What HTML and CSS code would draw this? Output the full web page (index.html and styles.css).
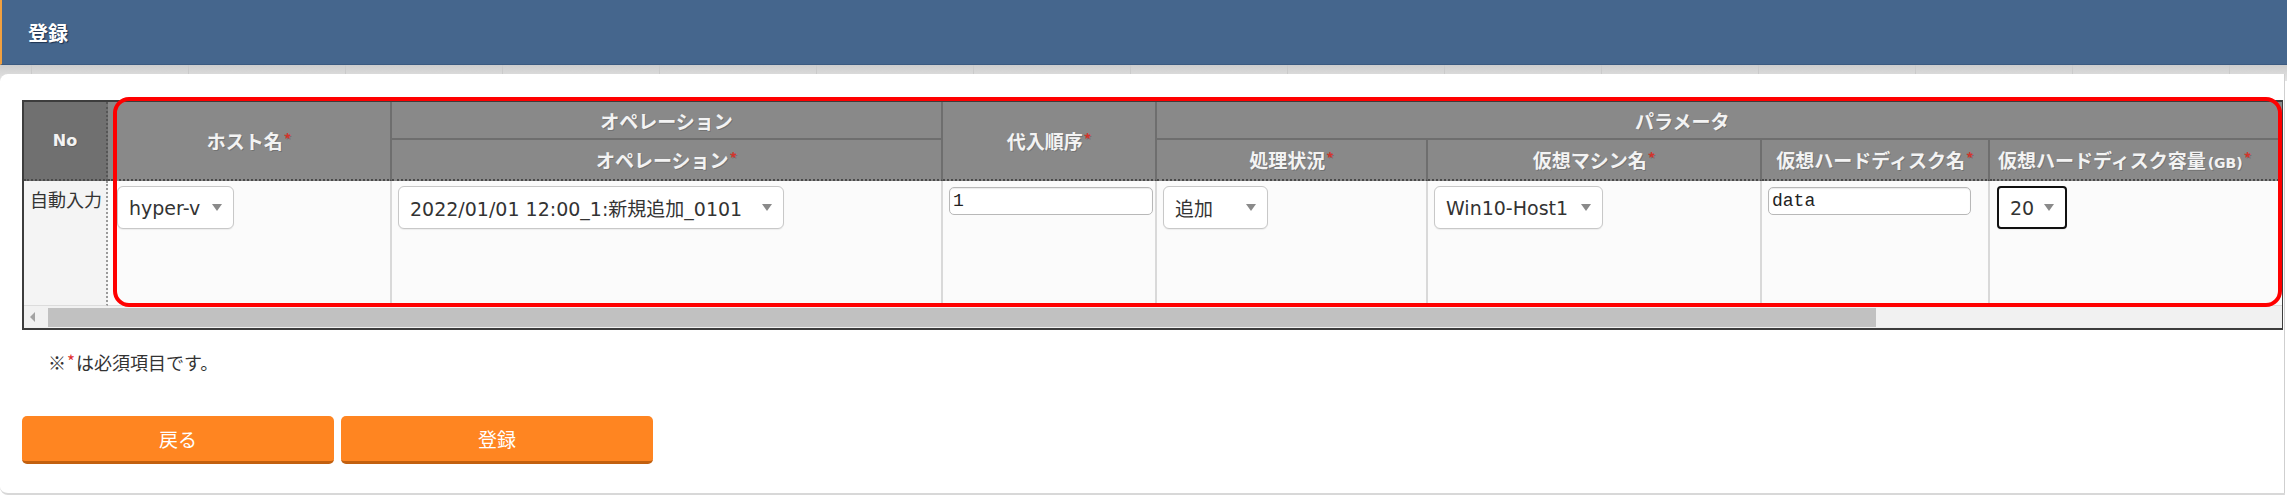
FILE: index.html
```html
<!DOCTYPE html>
<html lang="ja">
<head>
    <meta charset="UTF-8">
    <meta name="viewport" content="width=device-width, initial-scale=1.0">
    <title>登録</title>
    <link rel="stylesheet" href="styles.css">
</head>
<body>
    <header class="titlebar">
        <h1>登録</h1>
    </header>

    <div class="page">
        <main class="panel">
            <div class="table-area">
                <div class="table-scroll">
                    <table class="entry-table">
                        <colgroup>
                            <col class="c-no">
                            <col class="c-host">
                            <col class="c-op">
                            <col class="c-order">
                            <col class="c-status">
                            <col class="c-vm">
                            <col class="c-disk">
                            <col class="c-size">
                        </colgroup>
                        <thead>
                            <tr class="r1">
                                <th rowspan="2" class="th-no">No</th>
                                <th rowspan="2" class="th-span">ホスト名<span class="req">*</span></th>
                                <th class="th-group">オペレーション</th>
                                <th rowspan="2" class="th-span">代入順序<span class="req">*</span></th>
                                <th colspan="4" class="th-group th-param">パラメータ</th>
                            </tr>
                            <tr class="r2">
                                <th>オペレーション<span class="req">*</span></th>
                                <th>処理状況<span class="req">*</span></th>
                                <th>仮想マシン名<span class="req">*</span></th>
                                <th>仮想ハードディスク名<span class="req">*</span></th>
                                <th class="th-last">仮想ハードディスク容量<span class="unit">(GB)</span><span class="req">*</span></th>
                            </tr>
                        </thead>
                        <tbody>
                            <tr>
                                <td class="td-no">自動入力</td>
                                <td class="td-host">
                                    <div class="select sel-host"><span>hyper-v</span><i class="caret"></i></div>
                                </td>
                                <td>
                                    <div class="select sel-op"><span>2022/01/01 12:00_1:新規追加_0101</span><i class="caret"></i></div>
                                </td>
                                <td>
                                    <input class="text-input in-order" type="text" value="1">
                                </td>
                                <td>
                                    <div class="select sel-status"><span>追加</span><i class="caret"></i></div>
                                </td>
                                <td>
                                    <div class="select sel-vm"><span>Win10-Host1</span><i class="caret"></i></div>
                                </td>
                                <td>
                                    <input class="text-input in-disk" type="text" value="data">
                                </td>
                                <td class="td-size">
                                    <div class="select sel-size focused"><span>20</span><i class="caret"></i></div>
                                </td>
                            </tr>
                        </tbody>
                    </table>
                </div>
                <div class="scrollbar">
                    <i class="scroll-left"></i>
                    <div class="scroll-thumb"></div>
                </div>
                <div class="highlight"></div>
            </div>

            <p class="note">※<span class="req-note">*</span>は必須項目です。</p>

            <div class="buttons">
                <button class="btn">戻る</button>
                <button class="btn">登録</button>
            </div>
        </main>
    </div>
</body>
</html>
```

FILE: styles.css
```css
/* === Base === */
body {
    margin: 0;
    background: #fff;
    color: #333;
    font-family: "DejaVu Sans", "Noto Sans CJK JP", sans-serif;
}

/* === Title bar === */
.titlebar {
    height: 65px;
    box-sizing: border-box;
    display: flex;
    align-items: center;
    padding-left: 26px;
    background: #45668d;
    border-left: 2px solid #f0a040;
    border-bottom: 1px solid #3b5a80;
}

.titlebar h1 {
    margin: 0;
    font-family: "Noto Sans CJK JP", sans-serif;
    font-size: 20px;
    font-weight: bold;
    color: #fff;
    text-shadow: 1px 1px 1px #1f3350;
}

/* === Page / panel === */
.page {
    padding-top: 9px;
    background-image:
        repeating-linear-gradient(90deg, #cacaca 0 1px, transparent 1px 157px),
        linear-gradient(#cdcdcd, #e4e4e4);
    background-size: 100% 9px, 100% 16px;
    background-position: 31px 0, 0 0;
    background-repeat: no-repeat;
}

.panel {
    margin-right: 2px;
    padding: 26px 1px 29px 22px;
    background: #fff;
    border-right: 1px solid #cfcfcf;
    border-bottom: 2px solid #d8d8d8;
    border-radius: 8px 0 0 8px;
}

/* === Table === */
.table-area {
    position: relative;
    border: 2px solid #3d3d3d;
    border-right-width: 1px;
}

.table-scroll {
    overflow: hidden;
}

.entry-table {
    table-layout: fixed;
    width: 2286px;
    border-collapse: separate;
    border-spacing: 0;
}

.c-no { width: 84px; }
.c-host { width: 284px; }
.c-op { width: 551px; }
.c-order { width: 214px; }
.c-status { width: 271px; }
.c-vm { width: 334px; }
.c-disk { width: 228px; }
.c-size { width: 320px; }

.entry-table th {
    box-sizing: border-box;
    padding: 0;
    background: #898989;
    color: #f3f3f3;
    font-family: "Noto Sans CJK JP", sans-serif;
    font-size: 19px;
    font-weight: bold;
    text-align: center;
    white-space: nowrap;
    text-shadow: 1px 1px 0 rgba(0, 0, 0, 0.18);
    border-right: 2px solid #6e6e6e;
}

.entry-table .r1 th { height: 38px; }
.entry-table .r2 th { height: 41px; }

.entry-table .th-group {
    border-bottom: 2px solid #6e6e6e;
}

.entry-table .th-span,
.entry-table .r2 th,
.entry-table .th-no {
    border-bottom: 2px dotted #4a4a4a;
}

.entry-table .th-no {
    background: #707070;
    font-family: "DejaVu Sans", sans-serif;
    font-size: 16px;
    border-right: 2px dotted #555;
}

.entry-table .th-param {
    text-align: left;
    padding-left: 478px;
}

.entry-table .th-last {
    text-align: left;
    padding-left: 8px;
}

.req {
    color: #d2352c;
    font-size: 15px;
    vertical-align: 4px;
    margin-left: 1px;
}

.unit {
    font-family: "DejaVu Sans", sans-serif;
    font-size: 14px;
    margin-left: 2px;
}

.entry-table td {
    box-sizing: border-box;
    height: 125px;
    padding: 5px 6px;
    vertical-align: top;
    background: #fbfbfb;
    border-right: 2px solid #d9d9d9;
    border-bottom: 1px solid #dcdcdc;
}

.entry-table .td-no {
    background: #f4f4f4;
    font-family: "Noto Sans CJK JP", sans-serif;
    font-size: 18px;
    line-height: 26px;
    white-space: nowrap;
    border-right: 2px dotted #9a9a9a;
}

.entry-table .td-host { padding-left: 9px; }
.entry-table .td-size { padding-left: 7px; }

/* === Form controls === */
.select {
    display: flex;
    align-items: center;
    justify-content: space-between;
    box-sizing: border-box;
    height: 43px;
    padding: 0 11px;
    background: #fff;
    border: 1px solid #c8c8c8;
    border-radius: 6px;
    box-shadow: 0 1px 1px rgba(0, 0, 0, 0.06);
    font-size: 19px;
    color: #333;
    white-space: nowrap;
}

.caret {
    width: 0;
    height: 0;
    border-left: 5px solid transparent;
    border-right: 5px solid transparent;
    border-top: 7px solid #8a8a8a;
}

.sel-host { width: 117px; }
.sel-op { width: 386px; }
.sel-status { width: 105px; }
.sel-vm { width: 169px; }
.sel-size { width: 70px; }

.select.focused {
    border: 2px solid #111;
    border-radius: 4px;
}

.text-input {
    display: block;
    box-sizing: border-box;
    height: 28px;
    margin: 1px 0 0 0;
    padding: 0 3px;
    background: #fff;
    border: 1px solid #b8b8b8;
    border-radius: 5px;
    box-shadow: inset 0 1px 1px rgba(0, 0, 0, 0.08);
    font-family: "Liberation Mono", monospace;
    font-size: 18px;
    color: #222;
}

.in-order { width: 204px; }
.in-disk { width: 203px; }

/* === Fake scrollbar === */
.scrollbar {
    display: flex;
    align-items: center;
    height: 22px;
    background: #f1f1f1;
}

.scroll-left {
    width: 0;
    height: 0;
    margin: 0 13px 0 6px;
    border-top: 5px solid transparent;
    border-bottom: 5px solid transparent;
    border-right: 5px solid #a3a3a3;
}

.scroll-thumb {
    width: 1828px;
    height: 19px;
    background: #c1c1c1;
}

/* === Annotation === */
.highlight {
    position: absolute;
    left: 89px;
    top: -5px;
    width: 2169px;
    height: 210px;
    box-sizing: border-box;
    border: 4px solid #f00;
    border-radius: 16px;
    pointer-events: none;
}

/* === Footer === */
.note {
    margin: 19px 0 0 26px;
    font-family: "Noto Sans CJK JP", sans-serif;
    font-size: 18px;
    line-height: 24px;
    color: #333;
}

.req-note {
    color: #e03030;
    font-size: 17px;
    vertical-align: 2px;
    margin: 0 1px;
}

.buttons {
    display: flex;
    gap: 7px;
    margin-top: 42px;
}

.btn {
    width: 312px;
    height: 48px;
    box-sizing: border-box;
    background: #ff8521;
    border: none;
    border-bottom: 3px solid #c2600f;
    border-radius: 5px;
    color: #fff;
    font-family: "Noto Sans CJK JP", sans-serif;
    font-size: 19px;
    cursor: pointer;
}
```
